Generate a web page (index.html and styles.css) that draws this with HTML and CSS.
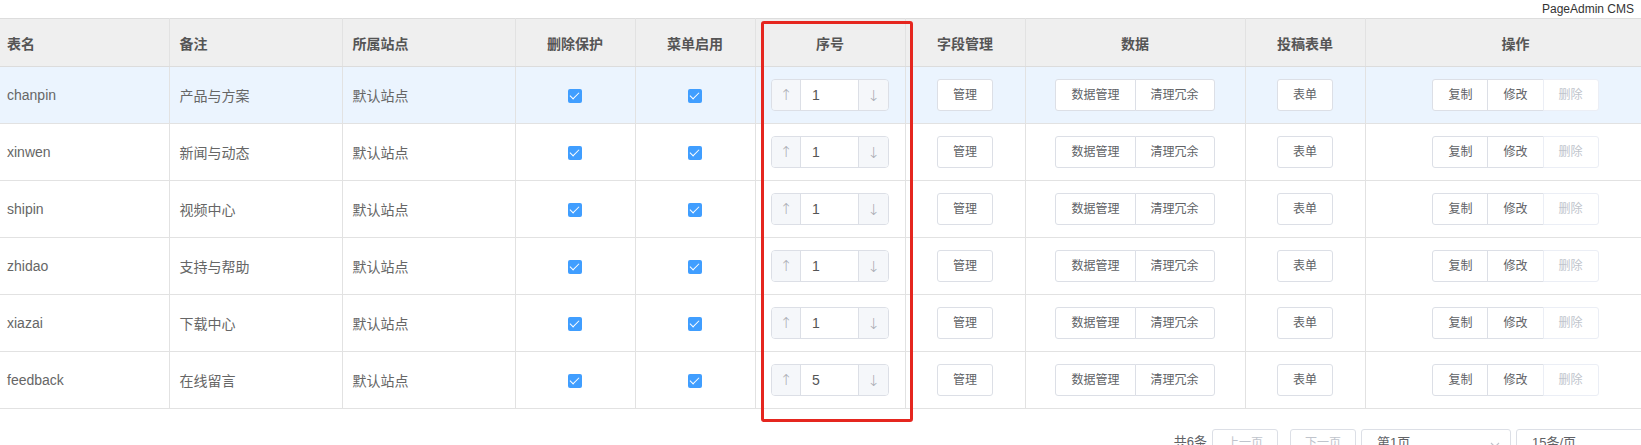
FILE: index.html
```html
<!DOCTYPE html>
<html lang="zh-CN">
<head>
    <meta charset="utf-8">
    <title>表管理 - PageAdmin CMS</title>
    <link rel="stylesheet" href="styles.css">
</head>
<body>
    <div class="page">
        <div class="topbar">PageAdmin CMS</div>
        <div class="content">
            <table class="grid">
                <colgroup>
                    <col class="w-name">
                    <col class="w-note">
                    <col class="w-site">
                    <col class="w-120">
                    <col class="w-120">
                    <col class="w-sort">
                    <col class="w-120">
                    <col class="w-data">
                    <col class="w-120">
                    <col class="w-ops">
                </colgroup>
                <thead>
                    <tr>
                        <th class="left">表名</th>
                        <th class="left">备注</th>
                        <th class="left">所属站点</th>
                        <th>删除保护</th>
                        <th>菜单启用</th>
                        <th>序号</th>
                        <th>字段管理</th>
                        <th>数据</th>
                        <th>投稿表单</th>
                        <th>操作</th>
                    </tr>
                </thead>
                <tbody id="tableBody">
                    <!-- rows are built by the script below -->
                </tbody>
            </table>

            <div class="pager">
                <span class="total">共6条</span>
                <span class="page-btn">上一页</span>
                <span class="page-btn next">下一页</span>
                <span class="select">第1页
                    <svg class="chev" width="10" height="6" viewBox="0 0 10 6"><path d="M1 1l4 4 4-4" fill="none" stroke="#c0c4cc" stroke-width="1.2"/></svg>
                </span>
                <span class="select">15条/页
                    <svg class="chev" width="10" height="6" viewBox="0 0 10 6"><path d="M1 1l4 4 4-4" fill="none" stroke="#c0c4cc" stroke-width="1.2"/></svg>
                </span>
            </div>

            <div class="mark"></div>
        </div>
    </div>

    <script>
        // table list
        var tables = [
            { name: 'chanpin', note: '产品与方案', sort: 1 },
            { name: 'xinwen', note: '新闻与动态', sort: 1 },
            { name: 'shipin', note: '视频中心', sort: 1 },
            { name: 'zhidao', note: '支持与帮助', sort: 1 },
            { name: 'xiazai', note: '下载中心', sort: 1 },
            { name: 'feedback', note: '在线留言', sort: 5 }
        ];

        var tableBody = document.getElementById('tableBody');
        tables.forEach(function (t, i) {
            var row = document.createElement('tr');
            if (i === 0) row.className = 'hover';
            row.innerHTML = `
                <td class="left">${t.name}</td>
                <td class="left">${t.note}</td>
                <td class="left">默认站点</td>
                <td><span class="check"></span></td>
                <td><span class="check"></span></td>
                <td>
                    <span class="stepper">
                        <span class="up">↑</span>
                        <span class="val">${t.sort}</span>
                        <span class="down">↓</span>
                    </span>
                </td>
                <td><span class="btn">管理</span></td>
                <td>
                    <span class="btn-group">
                        <span class="btn">数据管理</span><span class="btn">清理冗余</span>
                    </span>
                </td>
                <td><span class="btn">表单</span></td>
                <td>
                    <span class="btn-group">
                        <span class="btn">复制</span><span class="btn">修改</span><span class="btn disabled">删除</span>
                    </span>
                </td>
            `;
            tableBody.appendChild(row);
        });
    </script>
</body>
</html>
```

FILE: styles.css
```css
* {
    box-sizing: border-box;
}
body {
    margin: 0;
    font-family: "Liberation Sans", "Noto Sans CJK SC", sans-serif;
    color: #666;
    background: #fff;
}
.page {
    width: 1641px;
    overflow: hidden;
}
.topbar {
    height: 18px;
    line-height: 18px;
    padding-right: 7px;
    text-align: right;
    font-family: "Liberation Sans", "Noto Sans CJK SC", sans-serif;
    font-size: 12px;
    color: #333;
}
.content {
    position: relative;
    width: 1666px;
}

/* table */
.grid {
    width: 1666px;
    border-collapse: collapse;
    table-layout: fixed;
}
.w-name { width: 169px; }
.w-note { width: 173px; }
.w-site { width: 173px; }
.w-120 { width: 120px; }
.w-sort { width: 150px; }
.w-data { width: 220px; }
.w-ops { width: 301px; }

th, td {
    padding: 0 10px;
    text-align: center;
    border: 1px solid #e2e2e2;
}
th:first-child, td:first-child {
    border-left: none;
    padding-left: 7px;
}
th {
    height: 48px;
    background: #efefef;
    color: #555;
    font-size: 14px;
    font-weight: bold;
    border-top-color: #ddd;
    border-bottom-color: #dcdcdc;
}
td {
    height: 57px;
    font-size: 14px;
    color: #666;
}
th.left, td.left {
    text-align: left;
}
tr.hover td {
    background: #ebf4fe;
}

/* checkbox */
.check {
    position: relative;
    display: inline-block;
    width: 14px;
    height: 14px;
    border-radius: 2px;
    background: #409eff;
    vertical-align: middle;
}
.check::after {
    content: "";
    position: absolute;
    left: 4px;
    top: 1px;
    width: 4px;
    height: 8px;
    border: 1px solid #fff;
    border-top: none;
    border-left: none;
    transform: rotate(45deg);
}

/* number stepper */
.stepper {
    display: inline-flex;
    width: 118px;
    height: 32px;
    border: 1px solid #dcdfe6;
    border-radius: 4px;
    overflow: hidden;
    vertical-align: middle;
    text-align: left;
}
.stepper .up,
.stepper .down {
    width: 29px;
    display: flex;
    align-items: center;
    justify-content: center;
    background: #f5f7fa;
    color: #a8abb2;
    font-family: "DejaVu Sans", sans-serif;
    font-size: 15px;
    font-weight: 300;
}
.stepper .up {
    border-right: 1px solid #dcdfe6;
}
.stepper .down {
    width: 30px;
    padding-top: 2px;
    border-left: 1px solid #dcdfe6;
}
.stepper .val {
    flex: 1;
    padding-left: 11px;
    line-height: 30px;
    font-size: 14px;
    color: #555;
    background: #fff;
}

/* buttons */
.btn {
    display: inline-block;
    height: 32px;
    padding: 0 15px;
    line-height: 30px;
    font-size: 12px;
    color: #606266;
    background: #fff;
    border: 1px solid #dcdfe6;
    border-radius: 3px;
    vertical-align: middle;
}
.btn-group {
    display: inline-flex;
    vertical-align: middle;
}
.btn-group .btn {
    border-radius: 0;
}
.btn-group .btn + .btn {
    margin-left: -1px;
}
.btn-group .btn:first-child {
    border-radius: 3px 0 0 3px;
}
.btn-group .btn:last-child {
    border-radius: 0 3px 3px 0;
}
.btn.disabled {
    color: #c0c4cc;
    border-color: #ebeef5;
}

/* pagination */
.pager {
    display: flex;
    justify-content: flex-end;
    align-items: flex-start;
    margin-top: 20px;
    font-size: 13px;
}
.pager .total {
    margin-right: 5px;
    padding-top: 3px;
    line-height: 20px;
    color: #606266;
}
.page-btn {
    width: 66px;
    height: 28px;
    padding-top: 3px;
    line-height: 20px;
    text-align: center;
    font-size: 12px;
    color: #c0c4cc;
    border: 1px solid #dcdfe6;
    border-radius: 3px;
}
.page-btn.next {
    margin-left: 12px;
}
.select {
    display: flex;
    align-items: flex-start;
    justify-content: space-between;
    width: 150px;
    height: 28px;
    margin-left: 5px;
    padding: 3px 10px 0 15px;
    line-height: 20px;
    font-size: 13px;
    color: #606266;
    border: 1px solid #dcdfe6;
    border-radius: 3px;
}
.select .chev {
    margin-top: 9px;
}

/* red highlight around the sort column */
.mark {
    position: absolute;
    left: 761px;
    top: 3px;
    width: 152px;
    height: 401px;
    border: 3px solid #e5261f;
    border-radius: 3px;
}
```
